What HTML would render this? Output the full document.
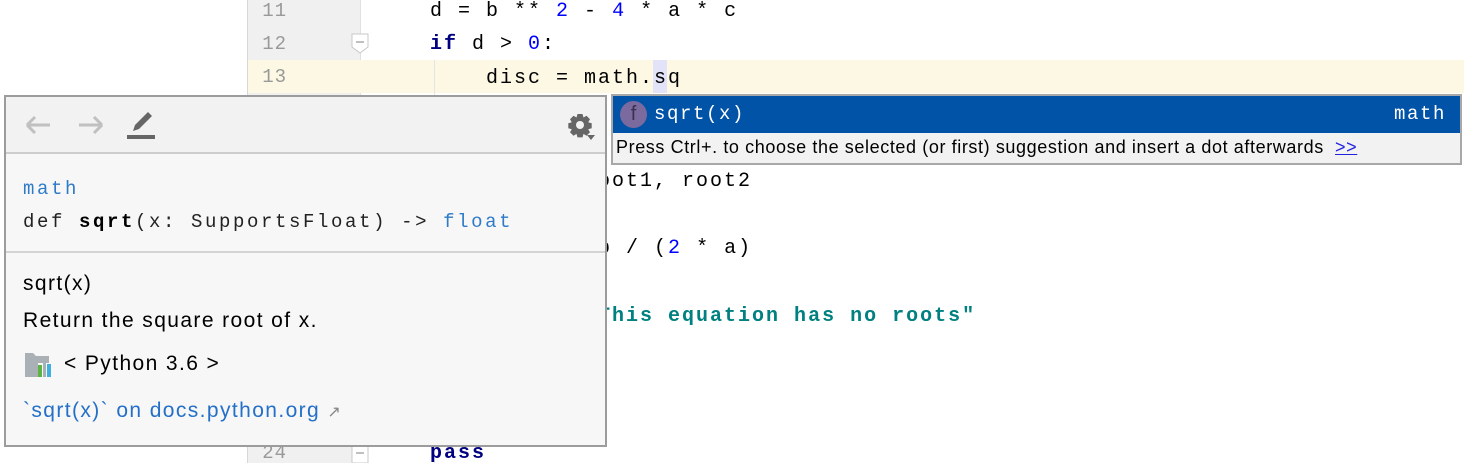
<!DOCTYPE html>
<html><head><style>
*{margin:0;padding:0;box-sizing:border-box}
body{width:1464px;height:463px;overflow:hidden;background:#fff;position:relative;font-family:"Liberation Sans",sans-serif}
.abs{position:absolute}
.mono{font-family:"Liberation Mono",monospace;font-size:20px;letter-spacing:2px;white-space:pre}
.ln{position:absolute;width:60px;text-align:right;color:#999;font-family:"Liberation Mono",monospace;font-size:19px;letter-spacing:1px}
.code{position:absolute;left:430px;line-height:34px;height:34px}
.kw{color:#000080;font-weight:bold}
.num{color:#0000ff}
.str{color:#008080;font-weight:bold}
.sans{font-family:"Liberation Sans",sans-serif;white-space:nowrap}
.doc{font-size:21px;letter-spacing:1.4px;color:#000}
</style></head><body>
<div class="abs" style="left:247px;top:0;width:113px;height:463px;background:#f0f0f0;border-left:1px solid #d8d8d8"></div>
<div class="abs" style="left:360px;top:0;width:1px;height:463px;background:#e0e0e0"></div>
<div class="abs" style="left:248px;top:60px;width:1216px;height:33px;background:#fdf8e3"></div>
<div class="abs" style="left:434px;top:60px;width:1px;height:403px;background:#e4e4e4"></div>
<div class="abs" style="left:653px;top:60px;width:14px;height:33px;background:#e2e2f8"></div>
<div class="ln" style="top:0px;left:227px">11</div>
<div class="ln" style="top:33px;left:227px">12</div>
<div class="ln" style="top:66px;left:227px">13</div>
<div class="ln" style="top:442px;left:227px">24</div>
<svg class="abs" style="left:351px;top:33px" width="18" height="22"><path d="M1 1H17V14L9 20L1 14Z" fill="#fff" stroke="#c8c8c8"/><path d="M5 9H13" stroke="#aaa" stroke-width="1.5"/></svg>
<svg class="abs" style="left:351px;top:444px" width="18" height="19"><path d="M1 1H17V19H1Z" fill="#fff" stroke="#c8c8c8"/><path d="M5 9H13" stroke="#aaa" stroke-width="1.5"/></svg>
<div class="code mono" style="top:-5px">d = b ** <span class="num">2</span> - <span class="num">4</span> * a * c</div>
<div class="code mono" style="top:28px"><span class="kw">if</span> d &gt; <span class="num">0</span>:</div>
<div class="code mono" style="top:62px">    disc = math.sq</div>
<div class="code mono" style="top:165px">    return root1, root2</div>
<div class="code mono" style="top:232px">    root = -b / (<span class="num">2</span> * a)</div>
<div class="code mono" style="top:300px">    return <span class="str">"This equation has no roots"</span></div>
<div class="code mono" style="top:437px"><span class="kw">pass</span></div>

<div class="abs" style="left:611px;top:94px;width:851px;height:71px;border:2px solid #a8a8a8;background:#f2f2f2">
  <div class="abs" style="left:0;top:0;width:847px;height:37px;background:#0053a6"></div>
  <div class="abs" style="left:7px;top:5px;width:27px;height:27px;border-radius:50%;background:#7b6a9e;color:#3a3050;font-size:20px;text-align:center;line-height:27px">f</div>
  <div class="abs mono" style="left:41px;top:7px;color:#fff;font-size:19px;letter-spacing:1.6px">sqrt(x)</div>
  <div class="abs mono" style="left:781px;top:7px;color:#fff;font-size:19px;letter-spacing:1.6px">math</div>
  <div class="abs sans" style="left:3px;top:41px;font-size:18px;letter-spacing:0.6px;color:#000">Press Ctrl+. to choose the selected (or first) suggestion and insert a dot afterwards&nbsp;&nbsp;<span style="color:#2222dd;text-decoration:underline">&gt;&gt;</span></div>
</div>

<div class="abs" style="left:4px;top:95px;width:603px;height:352px;border:2px solid #9c9c9c;background:#f7f7f7">
  <div class="abs" style="left:0;top:0;width:599px;height:57px;background:#f2f2f2;border-bottom:2px solid #cdcdcd"></div>
  <svg class="abs" style="left:17px;top:16px" width="30" height="24"><path d="M4 12H27M4 12L12 4M4 12L12 20" stroke="#c0c0c0" stroke-width="3" fill="none"/></svg>
  <svg class="abs" style="left:70px;top:16px" width="30" height="24"><path d="M3 12H26M26 12L18 4M26 12L18 20" stroke="#c0c0c0" stroke-width="3" fill="none"/></svg>
  <svg class="abs" style="left:118px;top:12px" width="34" height="32"><path d="M9 22L11 16L24 3L28 7L15 20Z" fill="#666"/><rect x="3" y="26" width="28" height="4" fill="#666"/></svg>
  <svg class="abs" style="left:560px;top:14px" width="32" height="32"><g transform="translate(14,14)"><path d="M-2.5-11h5l1 3.5 3-1.8 3.5 3.5-1.8 3 3.5 1v5l-3.5 1 1.8 3-3.5 3.5-3-1.8-1 3.5h-5l-1-3.5-3 1.8-3.5-3.5 1.8-3-3.5-1v-5l3.5-1-1.8-3 3.5-3.5 3 1.8z" fill="#666"/><circle r="4" fill="#f2f2f2"/></g><path d="M21 24h8l-4 5z" fill="#666"/></svg>
  <div class="abs mono" style="left:17px;top:81px;color:#2e7bc8;font-size:19px;letter-spacing:2.6px">math</div>
  <div class="abs mono" style="left:17px;top:114px;color:#222;font-size:19px;letter-spacing:2.6px">def <b style="color:#000">sqrt</b>(x: SupportsFloat) -&gt; <span style="color:#2e7bc8">float</span></div>
  <div class="abs" style="left:0;top:154px;width:599px;height:2px;background:#d4d4d4"></div>
  <div class="abs sans doc" style="left:17px;top:175px">sqrt(x)</div>
  <div class="abs sans doc" style="left:17px;top:212px">Return the square root of x.</div>
  <svg class="abs" style="left:19px;top:256px" width="30" height="26"><path d="M0 0H8L11 3H24V10H0Z" fill="#a9b0b6"/><rect x="0" y="4" width="13" height="20" fill="#a9b0b6"/><rect x="13" y="12" width="4" height="12" fill="#5db346"/><rect x="18" y="8" width="3" height="16" fill="#a9b0b6"/><rect x="22" y="11" width="4" height="13" fill="#40b0e0"/></svg>
  <div class="abs sans doc" style="left:58px;top:255px">&lt; Python 3.6 &gt;</div>
  <div class="abs sans doc" style="left:17px;top:302px;color:#2470c8">`sqrt(x)` on docs.python.org <span style="color:#888;font-size:16px">&#x2197;</span></div>
</div>
</body></html>
